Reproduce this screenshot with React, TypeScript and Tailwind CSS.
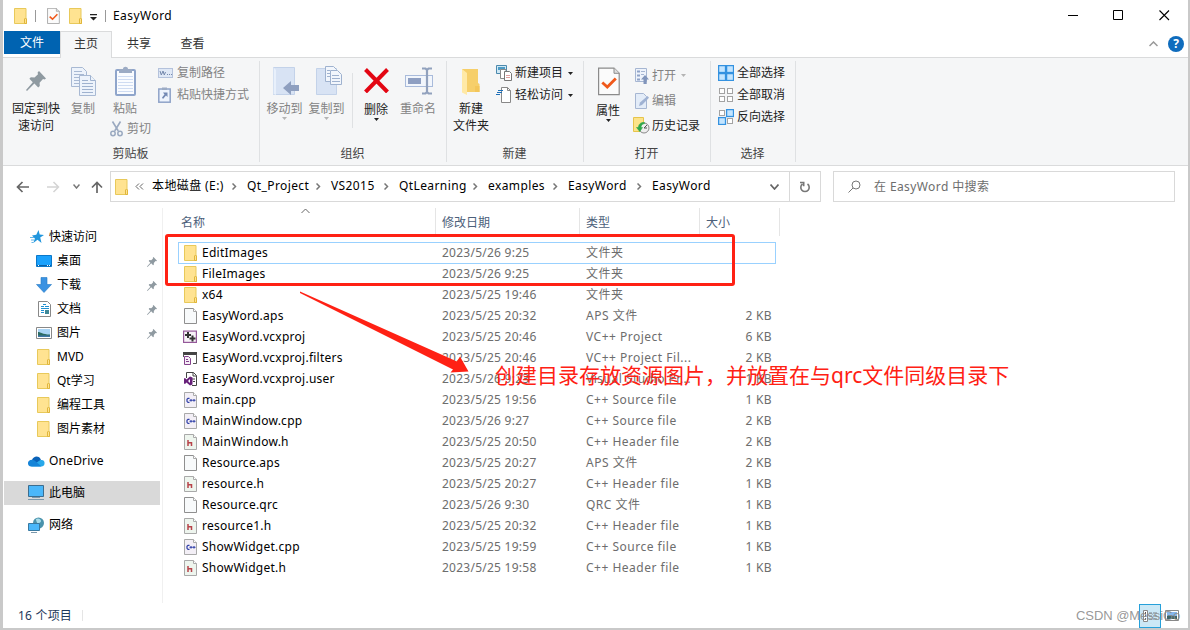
import React from 'react';

type IconProps = { className?: string };

const FolderIcon: React.FC<IconProps> = ({ className }) => (
    <svg className={className} width="14" height="16" viewBox="0 0 14 16" fill="none">
        <path d="M.5.5h11.500v11h.5v4H.5z" fill="#ffe391" stroke="#e8c95a" />
        <path d="M10.500 15.500v-4.500l1-1 1 1v4.500z" fill="#ffe391" stroke="#e0b63c" />
    </svg>
);

const PinIcon: React.FC<IconProps & { size: number }> = ({ className, size }) => (
    <svg className={className} width={size} height={size} viewBox="0 0 20 20" fill="#8f9aa1">
        <path d="M13 0 20 7.5 18.6 8.6 17 8.1 13.6 11.8 13.8 15 12.2 16.5 8.4 12.6 1 20 0 19 6.8 11.3 3.4 7.8 4.8 6.2 8.5 6.6 12 3.2 11.6 1.4z" />
    </svg>
);

const CheckDocIcon: React.FC<{ width: number; height: number }> = ({ width, height }) => (
    <svg width={width} height={height} viewBox="0 0 22 28" fill="none">
        <path d="M.6.6H16l5.2 5.2v21.4H.6z" fill="#fbfbfb" stroke="#8b8b8b" strokeWidth="1.2" />
        <path d="M16 .6v5.2h5.2" fill="#ddd" stroke="#8b8b8b" />
        <path d="m4.3 15 5 4.6L17.8 11" stroke="#f0591b" strokeWidth="2.8" />
    </svg>
);

const CopyIcon = () => (
    <svg width="25" height="29" viewBox="0 0 25 29" fill="#edf3fb" stroke="#a8b9d3">
        <path d="M.5.5h11l4 4v15H.5z" />
        <path d="M3 4.5h8M3 7.5h10M3 10.500h10M3 13.500h10M3 16.500h5" />
        <path d="M8.500 8.500h11l5 5v15h-16z" />
        <path d="M19.500 8.500v5h5M11 13.500h6M11 16.500h11M11 19.500h11M11 22.500h11M11 25.500h11" stroke="#9fb2cf" />
    </svg>
);

const PasteIcon = () => (
    <svg width="21" height="30" viewBox="0 0 21 30" fill="none">
        <rect x="1" y="4" width="19" height="25" rx="1" fill="#fafcff" stroke="#8fa5cb" strokeWidth="2" />
        <path d="M4 3h4c0-3 5-3 5 0h4v4H4z" fill="#9cabc4" />
        <path d="M3 10.500h15M3 13.500h15M3 16.500h15M3 19.500h15M3 22.500h15M3 25.500h15" stroke="#cfdcf2" />
    </svg>
);

const ScissorsIcon = () => (
    <svg width="13" height="16" viewBox="0 0 13 16" fill="none" stroke="#9aa9c0">
        <path d="M2.500.5 8.300 10M10.500.5 4.700 10" strokeWidth="1.600" />
        <circle cx="3" cy="12.500" r="2.200" strokeWidth="1.500" />
        <circle cx="10" cy="12.500" r="2.200" strokeWidth="1.500" />
    </svg>
);

const PathIcon = () => (
    <svg width="15" height="10" viewBox="0 0 15 10" fill="none">
        <rect x=".5" y=".5" width="14" height="9" fill="#dfe8f6" stroke="#b4c2dc" />
        <path d="m2 3 1.300 4L5 3l1.300 4L7.500 4M9 6.500h1M11 6.500h1M13 6.500h1" stroke="#7589ad" />
    </svg>
);

const ShortcutIcon = () => (
    <svg width="13" height="16" viewBox="0 0 13 16" fill="none">
        <rect x=".8" y="2" width="11.400" height="13.200" fill="#eef4fd" stroke="#8fa3c8" strokeWidth="1.500" />
        <path d="M4 .5h5v2.500H4z" fill="#9cabc4" />
        <path d="M5 5.500h4.500V10L8 8.600 5 12 4 10.500l2.500-3z" fill="#7389b4" />
    </svg>
);

const MoveToIcon = () => (
    <svg width="26" height="29" viewBox="0 0 26 29" fill="none">
        <path d="M.5.5h21v27H.5z" fill="#d8e3f4" stroke="#c3d2e9" />
        <path d="M.5.5 3 3v25l-2.500-1z" fill="#e8f0fb" />
        <path d="M10 21 18 14v4h8v6h-8v4z" fill="#8e9fbf" />
    </svg>
);

const CopyToIcon = () => (
    <svg width="26" height="30" viewBox="0 0 26 30" fill="none">
        <path d="M.5 2.500h20v26H.5z" fill="#d8e3f4" stroke="#c3d2e9" />
        <path d="M9.500.5h8l3 3v12h-11z" fill="#f2f6fc" stroke="#9fb2cf" />
        <path d="M14.500 4.500h7l4 4v10h-11z" fill="#f2f6fc" stroke="#9fb2cf" />
        <path d="M11 4.500h3M11 7.500h3M11 10.500h3M16 9.500h7M16 12.500h8M16 15.500h8" stroke="#9fb2cf" />
    </svg>
);

const DeleteIcon = () => (
    <svg width="25" height="25" viewBox="0 0 25 25" fill="none">
        <path d="M1.500 1.500 23.500 24M23.500 1.500 1.500 24" stroke="#e30613" strokeWidth="4" />
    </svg>
);

const RenameIcon = () => (
    <svg width="28" height="28" viewBox="0 0 28 28" fill="none">
        <rect x=".5" y="8.500" width="27" height="11" fill="#f2f6fc" stroke="#a9bbdb" />
        <path d="M3 11h13v6H3z" fill="#8e9fc2" />
        <path d="M17 1.500h3.500L22 3l1.500-1.500H27M22 2v24M17 26.500h3.500L22 25l1.500 1.500H27" stroke="#91a1bd" strokeWidth="2.200" />
    </svg>
);

const NewFolderIcon = () => (
    <svg width="20" height="28" viewBox="0 0 20 28" fill="none">
        <path d="M1 1h16v14l1.500 1v8H1z" fill="#f6cf6a" />
        <path d="M1 1 6 5v22l-5-2.500z" fill="#ffe9a6" />
        <path d="M14 18h4.500v6H14z" fill="#f3c65a" />
    </svg>
);

const NewItemIcon = () => (
    <svg width="16" height="16" viewBox="0 0 16 16" fill="none">
        <path d="M.5.5h10v8H.5z" fill="#cfe8f5" stroke="#4b89ad" />
        <path d="M2 2h7v3H2z" fill="#4c9bc5" />
        <path d="M4.500 4.500H10v9H4.500z" fill="#fff" stroke="#8a8a8a" />
        <path d="M8.500 6.500h5l2 2v7h-7z" fill="#fff" stroke="#777" />
        <path d="M10 10.500h4M10 12.500h4" stroke="#e1a0a0" />
    </svg>
);

const EasyAccessIcon = () => (
    <svg width="16" height="16" viewBox="0 0 16 16" fill="none">
        <path d="M5.500.5h6l3 3v12h-9z" fill="#fff" stroke="#888" />
        <path d="M11.500.5v3h3" stroke="#888" />
        <path d="M2 3.500h5M1 5.500h5M0 7.500h4" stroke="#1d6fb8" strokeWidth="1.200" />
    </svg>
);

const OpenIcon = () => (
    <svg width="14" height="16" viewBox="0 0 14 16" fill="none">
        <path d="M.5.500h11v13H.5z" fill="#eef3fb" stroke="#a6b6d2" />
        <path d="M2 3.500h3M2 7.500h3M2 11.500h3" stroke="#8fa3c8" strokeWidth="2" />
        <path d="M6 3.500h4M6 6.500h3" stroke="#a6b6d2" />
        <path d="m10 7 4 4.500h-2.300V16H8.500v-4.500H6z" fill="#8195bb" />
    </svg>
);

const EditIcon = () => (
    <svg width="14" height="16" viewBox="0 0 14 16" fill="none">
        <path d="M.5.5h8l3 3v12H.5z" fill="#e3ecf8" stroke="#a6b6d2" />
        <path d="m4 13 1-3.500L12.500 3 14 4.800 7 12z" fill="#9fb2d3" />
    </svg>
);

const HistoryIcon = () => (
    <svg width="17" height="17" viewBox="0 0 17 17" fill="none">
        <path d="M.5.5h10v14H.5z" fill="#fce38a" stroke="#e6c44b" />
        <circle cx="11" cy="11" r="5" fill="#eee" stroke="#888" />
        <path d="m11 11 3-3M11 11h3" stroke="#555" />
        <path d="M11.500 5.500C7 5 5.500 8 5.500 10.500H3.500L6.800 14.500 9.500 10.500H8C8 8.500 9 7 11.500 6.500z" fill="#2fa84a" stroke="#2fa84a" strokeWidth=".6" />
    </svg>
);

const SelectIcon: React.FC<{ on: boolean[] }> = ({ on }) => (
    <svg width="16" height="16" viewBox="0 0 16 16">
        {on.map((v, i) => (
            <rect
                key={i}
                x={(i % 2) * 8 + (v ? 0.6 : 1.5)}
                y={(i > 1 ? 8 : 0) + (v ? 0.6 : 1.5)}
                width={v ? 6.9 : 5}
                height={v ? 6.9 : 5}
                fill={v ? '#c4e5ff' : '#fff'}
                stroke={v ? '#3492e0' : '#a3a3a3'}
                strokeWidth={v ? 1.3 : 1}
            />
        ))}
    </svg>
);

const Caret: React.FC<IconProps & { color?: string }> = ({ className, color = '#222' }) => (
    <svg className={className} width="5" height="3" viewBox="0 0 5 3">
        <path d="M0 0h5L2.500 3z" fill={color} />
    </svg>
);

const Chevron: React.FC<IconProps & { d: string; width?: number; height?: number; color?: string; stroke?: number }> = ({ className, d, width = 9, height = 6, color = '#666', stroke = 1.5 }) => (
    <svg className={className} width={width} height={height} viewBox={`0 0 ${width} ${height}`} fill="none">
        <path d={d} stroke={color} strokeWidth={stroke} />
    </svg>
);

const FileIcon: React.FC<{ kind: string }> = ({ kind }) => {
    if (kind === 'folder') return <FolderIcon />;
    if (kind === 'proj') {
        return (
            <svg className="-ml-px" width="14" height="14" viewBox="0 0 14 14">
                <rect x=".6" y="1.100" width="12.800" height="11.300" fill="#f7f2f7" stroke="#95599a" strokeWidth="1.200" />
                <path d="M2 5h6M5 2v6M6.500 8.500h6M9.500 5.500v6" stroke="#333" strokeWidth="2" />
            </svg>
        );
    }
    if (kind === 'filters') {
        return (
            <svg className="-ml-px" width="14" height="14" viewBox="0 0 14 14" fill="none">
                <path d="M0 1h14v3H0z" fill="#444" />
                <path d="M13.500 3v9.500H10M.5 3v3" stroke="#555" />
                <path d="M1.500 5.500h4l2 2v6h-6z" fill="#f6edf7" stroke="#84428c" />
                <path d="M3 8.500h2M3 10.500h3" stroke="#84428c" />
            </svg>
        );
    }
    if (kind === 'user') {
        return (
            <svg width="14" height="14" viewBox="0 0 14 14" fill="none">
                <path d="M2.500 6V.500h7l3 3v10H8" stroke="#444" />
                <path d="M9 .5v3.500h3.500M7 7h4M9 9.500h2" stroke="#444" />
                <path d="M6 4.500 8.500 5.500v7L6 13.500 2.500 10.500 1 12l-1-.5v-5L1 6l1.500 1.500zM6 7 4 9l2 2z" fill="#68217a" />
            </svg>
        );
    }
    return (
        <svg width="13" height="16" viewBox="0 0 13 16" fill="none">
            <path d="M.5.5h9l3 3v12H.5z" fill={kind === 'h' ? '#eef5ee' : kind === 'cpp' ? '#f3eff6' : '#f8fafb'} stroke={kind === 'file' ? '#8f8f8f' : '#a9a9a9'} />
            <path d="M9.500.5v3h3" fill="#fff" stroke="#aaa" />
            {kind === 'h' && <path d="M4 6v6M4 8.700h3.500V12" stroke="#b8434a" strokeWidth="1.500" />}
            {kind === 'cpp' && (
                <>
                    <path d="M5.500 6.300H4L3 7.300v2l1 1h1.500" stroke="#2f3fa8" strokeWidth="1.200" />
                    <path d="M5.500 8.300H8.500M7 7v2.600M8.500 8.300H11.500M10 7v2.600" stroke="#2f3fa8" />
                </>
            )}
        </svg>
    );
};

interface BigButtonProps {
    icon: React.ReactNode;
    lines: string[];
    width: string;
    disabled?: boolean;
    caret?: boolean;
}

const BigButton: React.FC<BigButtonProps> = ({ icon, lines, width, disabled, caret }) => (
    <div className={`flex shrink-0 flex-col items-center ${width} ${disabled ? 'text-[#838383]' : 'text-[#222]'}`}>
        <div className="flex h-[34px] items-start justify-center">{icon}</div>
        {lines.map((line) => (
            <span key={line} className="leading-[17px]">{line}</span>
        ))}
        {caret && <Caret color={disabled ? '#b4b4b4' : '#222'} />}
    </div>
);

const SmallButton: React.FC<{ icon: React.ReactNode; label: string; disabled?: boolean; caret?: boolean; height?: string }> = ({ icon, label, disabled, caret, height = 'h-[22px]' }) => (
    <div className={`flex items-center ${height} ${disabled ? 'text-[#838383]' : 'text-[#222]'}`}>
        <span className="flex w-[19px] shrink-0 items-center">{icon}</span>
        <span>{label}</span>
        {caret && <Caret className="ml-[5px]" color={disabled ? '#b4b4b4' : '#222'} />}
    </div>
);

const RibbonGroup: React.FC<{ label: string; width: string; children: React.ReactNode }> = ({ label, width, children }) => (
    <div className={`my-[3px] flex shrink-0 flex-col border-r border-[#dfe1e3] ${width}`}>
        <div className="flex flex-1 pt-[5px]">{children}</div>
        <div className="h-[17px] pr-px text-center leading-[18px] text-[#444]">{label}</div>
    </div>
);

const Ribbon = () => (
    <div className="flex h-[109px] border-y border-[#dadbdc] bg-[#f5f6f7]">
        <RibbonGroup label="剪贴板" width="w-[257px]">
            <BigButton width="ml-[5px] w-[56px]" icon={<PinIcon size={20} className="mt-[5px]" />} lines={['固定到快', '速访问']} />
            <BigButton width="ml-[2px] w-[34px]" icon={<div className="pt-px pl-px"><CopyIcon /></div>} lines={['复制']} disabled />
            <div className="ml-[10px] w-[48px]">
                <BigButton width="w-[30px]" icon={<div className="pl-px"><PasteIcon /></div>} lines={['粘贴']} disabled />
                <div className="mt-px flex h-[22px] items-center gap-1 text-[#838383]">
                    <ScissorsIcon />
                    <span>剪切</span>
                </div>
            </div>
            <div className="-mt-1">
                <SmallButton icon={<PathIcon />} label="复制路径" disabled />
                <SmallButton icon={<ShortcutIcon />} label="粘贴快捷方式" disabled />
            </div>
        </RibbonGroup>
        <RibbonGroup label="组织" width="w-[187px]">
            <BigButton width="ml-1 w-[41px]" icon={<div className="pt-px pl-[3px]"><MoveToIcon /></div>} lines={['移动到']} disabled caret />
            <BigButton width="w-[43px]" icon={<div className="pl-[4px]"><CopyToIcon /></div>} lines={['复制到']} disabled caret />
            <div className="mt-[7px] ml-[4px] h-[55px] w-px bg-[#dfe1e3]" />
            <BigButton width="ml-[6px] mt-px w-[34px]" icon={<div className="pt-px pl-px"><DeleteIcon /></div>} lines={['删除']} caret />
            <BigButton width="ml-[4px] w-[42px]" icon={<div className="pt-px pl-[2px]"><RenameIcon /></div>} lines={['重命名']} disabled />
        </RibbonGroup>
        <RibbonGroup label="新建" width="w-[137px]">
            <BigButton width="ml-1 w-[40px]" icon={<div className="pt-[2px]"><NewFolderIcon /></div>} lines={['新建', '文件夹']} />
            <div className="-mt-1 ml-[5px]">
                <SmallButton icon={<NewItemIcon />} label="新建项目" caret />
                <SmallButton icon={<EasyAccessIcon />} label="轻松访问" caret />
            </div>
        </RibbonGroup>
        <RibbonGroup label="打开" width="w-[127px]">
            <BigButton width="ml-[6px] mt-[2px] w-[36px]" icon={<div className="-mt-px pl-px"><CheckDocIcon width={22} height={29} /></div>} lines={['属性']} caret />
            <div className="-mt-[4px] ml-[7px]">
                <SmallButton height="h-[27px]" icon={<span className="pl-[2px]"><OpenIcon /></span>} label="打开" disabled caret />
                <SmallButton height="h-[24px]" icon={<span className="pl-[2px]"><EditIcon /></span>} label="编辑" disabled />
                <SmallButton height="h-[25px]" icon={<HistoryIcon />} label="历史记录" />
            </div>
        </RibbonGroup>
        <RibbonGroup label="选择" width="w-[85px]">
            <div className="-mt-1 ml-[7px]">
                <SmallButton icon={<SelectIcon on={[true, true, true, true]} />} label="全部选择" />
                <SmallButton icon={<SelectIcon on={[false, false, false, false]} />} label="全部取消" />
                <SmallButton icon={<SelectIcon on={[false, true, true, false]} />} label="反向选择" />
            </div>
        </RibbonGroup>
    </div>
);

const TitleBar = () => (
    <div className="flex h-[31px] shrink-0 items-center">
        <FolderIcon className="ml-[11px]" />
        <div className="ml-[7px] h-3 w-px bg-[#999]" />
        <div className="ml-[11px]"><CheckDocIcon width={13} height={16} /></div>
        <FolderIcon className="ml-[9px]" />
        <svg className="mt-[3px] ml-[7px]" width="7" height="7" viewBox="0 0 7 7">
            <path d="M0 0h7v1.200H0zM0 3h7L3.500 6.500z" fill="#222" />
        </svg>
        <div className="ml-[8px] h-3 w-px bg-[#999]" />
        <span className="ml-[7px] text-[12px] tracking-[0.45px] text-black">EasyWord</span>
        <div className="mr-[18px] ml-auto flex items-center">
            <svg width="11" height="11" viewBox="0 0 11 11"><path d="M0 5.500h10" stroke="#000" /></svg>
            <svg className="ml-[34px]" width="11" height="11" viewBox="0 0 11 11" fill="none"><path d="M.5.5h9v9h-9z" stroke="#000" /></svg>
            <svg className="ml-[35px]" width="11" height="11" viewBox="0 0 11 11" fill="none"><path d="m.5.5 9.500 9.500m0-9.500L.5 10" stroke="#000" strokeWidth="1.100" /></svg>
        </div>
    </div>
);

const Tabs = () => (
    <div className="flex h-[26px] shrink-0 text-[#333]">
        <div className="ml-px h-[23px] w-[56px] bg-[#0063b1] text-center leading-[24px] text-white">文件</div>
        <div className="z-10 -mb-px h-[27px] w-[52px] border border-b-0 border-[#dadbdc] bg-[#f5f6f7] text-center leading-[24px]">主页</div>
        <div className="w-[54px] text-center leading-[25px]">共享</div>
        <div className="w-[53px] text-center leading-[25px]">查看</div>
        <div className="mr-[4px] ml-auto flex items-center">
            <Chevron d="m.5 5 4-4 4 4" color="#999" />
            <div className="ml-[10px] h-4 w-4 rounded-full bg-[#0f6cbd] text-center text-[12px] leading-4 font-bold text-white">?</div>
        </div>
    </div>
);

const crumbs = [
    { name: '本地磁盘 (E:)', width: 'w-[95px]' },
    { name: 'Qt_Project', width: 'w-[84px]' },
    { name: 'VS2015', width: 'w-[68px]' },
    { name: 'QtLearning', width: 'w-[89px]' },
    { name: 'examples', width: 'w-[80px]' },
    { name: 'EasyWord', width: 'w-[84px]' },
    { name: 'EasyWord', width: '' },
];

const AddressBar = () => (
    <div className="flex h-[40px] shrink-0 items-start pt-[5px]">
        <div className="flex h-[31px] w-[107px] items-center pl-[13px]">
            <svg width="13" height="12" viewBox="0 0 13 12" fill="none" stroke="#666" strokeWidth="1.700"><path d="M13 6H1.500M6.500 1l-5 5 5 5" /></svg>
            <svg className="ml-[18px]" width="13" height="12" viewBox="0 0 13 12" fill="none" stroke="#d4d4d4" strokeWidth="1.500"><path d="M0 6h11.500M6.500 1l5 5-5 5" /></svg>
            <Chevron className="ml-[13px]" width={7} height={5} d="m.5.5 3 3.500 3-3.500" color="#777" />
            <svg className="ml-[11px]" width="12" height="12" viewBox="0 0 12 12" fill="none" stroke="#666" strokeWidth="1.700"><path d="M6 12V1.500M1 6.500l5-5 5 5" /></svg>
        </div>
        <div className="flex h-[31px] w-[711px] items-center border border-[#d9d9d9] text-black">
            <FolderIcon className="ml-[4px]" />
            <Chevron className="ml-[6px]" width={9} height={7} d="m4 .5-3 3 3 3M8 .5l-3 3 3 3" color="#666" stroke={1} />
            <div className="ml-[8px] flex flex-1">
                {crumbs.map((c, i) => (
                    <div key={i} className={`flex shrink-0 items-center ${c.width}`}>
                        <span className="-mt-[2px] tracking-[0.4px] whitespace-nowrap">{c.name}</span>
                        {c.width && <Chevron className="mr-[10px] ml-auto" width={5} height={7} d="m.5.5 3 3-3 3" color="#777" />}
                    </div>
                ))}
            </div>
            <Chevron className="mr-[10px]" d="m.5.5 4 4.500 4-4.500" color="#666" stroke={1.7} />
            <div className="flex h-full w-[31px] items-center justify-center border-l border-[#d9d9d9]">
                <svg width="12" height="12" viewBox="0 0 12 12" fill="none" stroke="#777" strokeWidth="1.600">
                    <path d="M8.500 3A4.200 4.200 0 1 1 3.500 3M1 1.500h3.700v3.700" />
                </svg>
            </div>
        </div>
        <div className="ml-[12px] flex h-[31px] w-[342px] items-center border border-[#d9d9d9] text-[#6d6d6d]">
            <svg className="ml-[14px]" width="13" height="13" viewBox="0 0 13 13" fill="none" stroke="#777"><circle cx="8" cy="5" r="4" /><path d="m5 8-4.500 4.500" /></svg>
            <span className="ml-[13px] tracking-[0.4px]">在 EasyWord 中搜索</span>
        </div>
    </div>
);

const DesktopIcon = () => (
    <svg width="16" height="12" viewBox="0 0 16 12"><path d="M.5.5h15v11H.5z" fill="#1aa1fc" stroke="#0b78c9" /><path d="M1 10h14v1H1z" fill="#0a5fa5" /><path d="M2 10h1v1H2zM11 10h1v1h-1zM13 10h1v1h-1z" fill="#fff" /></svg>
);

const DownloadIcon = () => (
    <svg width="16" height="16" viewBox="0 0 16 16"><path d="M5 .5h6v7h4.500L8 15.500.500 7.500H5z" fill="#3a92e2" stroke="#2478c4" strokeWidth=".6" /></svg>
);

const DocumentIcon = () => (
    <svg width="13" height="16" viewBox="0 0 13 16" fill="none"><path d="M.5.5h9l3 3v12H.5z" fill="#fff" stroke="#888" /><path d="M5 3.500h3M3 5.500h3M7 5.500h4M3 7.500h8M3 9.500h3M3 11.500h3" stroke="#1f8fd0" /><path d="M7 9h4v4H7z" fill="#3d8797" /></svg>
);

const PicturesIcon = () => (
    <svg width="16" height="12" viewBox="0 0 16 12"><path d="M.5.5h15v11H.5z" fill="#fff" stroke="#888" /><path d="M2 2h12v8H2z" fill="#a9d4f5" /><path d="M2 5c3 0 4 2.500 12 2.500V10H2z" fill="#2c6b62" /><path d="M2 8.500h12V10H2z" fill="#3f77a8" /></svg>
);

const StarIcon = () => (
    <svg width="14" height="14" viewBox="0 0 14 14"><path d="m8.500 0 1.200 4.600L14 5l-3.800 2.600L11.500 13 7.500 9.800 3.300 13l1.600-4.500L2 5.600l4.300-.8z" fill="#2196dd" /><path d="M0 7.500h4M1 10h3M1.500 12.500h2" stroke="#61b6e8" /></svg>
);

const OneDriveIcon = () => (
    <svg width="17" height="11" viewBox="0 0 17 11"><path d="M4 4C5.500-.5 11.500-.8 13 4l-6 5H2.500C-.5 8.500-.5 4.500 4 4z" fill="#0a62b8" /><path d="M3 10.500 12 4.300c3-1 5 .7 4.500 3.500-.2 1.800-1.500 2.700-3 2.700z" fill="#28a8ea" /><path d="M0 7.500C0 4 4 3 6.500 4.500l6.800 5.700-.8.300H3C1.500 10.500 0 9.500 0 7.500z" fill="#1584d8" /></svg>
);

const ComputerIcon = () => (
    <svg width="17" height="16" viewBox="0 0 17 16"><path d="M.5.5h15v11H.5z" fill="#4ab7fa" stroke="#3c6d8e" /><path d="M4 12.500h8M0 14.500h16" stroke="#7b98ab" /></svg>
);

const NetworkIcon = () => (
    <svg width="17" height="17" viewBox="0 0 17 17"><circle cx="10.500" cy="6" r="5.500" fill="#4b93ac" /><path d="M8 2c2-1.500 5 0 5 2s-2 1-2 3-3-2-3-5z" fill="#a9dcea" /><path d="M.5 6.500h11v7H.5z" fill="#4ab7fa" stroke="#3979a0" /><path d="M3 15.500h6" stroke="#7b98ab" /></svg>
);

const quickAccess = [
    { name: '桌面', icon: <DesktopIcon />, pinned: true },
    { name: '下载', icon: <DownloadIcon />, pinned: true },
    { name: '文档', icon: <DocumentIcon />, pinned: true },
    { name: '图片', icon: <PicturesIcon />, pinned: true },
    { name: 'MVD', icon: <FolderIcon /> },
    { name: 'Qt学习', icon: <FolderIcon /> },
    { name: '编程工具', icon: <FolderIcon /> },
    { name: '图片素材', icon: <FolderIcon /> },
];

const Sidebar = () => (
    <div className="mt-[2px] flex w-[160px] shrink-0 flex-col border-r border-[#f0f0f0] pt-[17px] text-black">
        <div className="flex h-6 items-center pl-[27px]">
            <StarIcon />
            <span className="ml-[5px]">快速访问</span>
        </div>
        {quickAccess.map((item) => (
            <div key={item.name} className="flex h-6 items-center pl-[33px]">
                <span className="flex w-[16px] justify-center">{item.icon}</span>
                <span className="ml-[5px]">{item.name}</span>
                {item.pinned && <PinIcon size={10} className="mt-px mr-[5px] ml-auto" />}
            </div>
        ))}
        <div className="mt-[8px] flex h-6 items-center pl-[25px]">
            <OneDriveIcon />
            <span className="ml-[4px] tracking-[0.2px]">OneDrive</span>
        </div>
        <div className="mt-[8px] mr-[2px] ml-px flex h-6 items-center bg-[#d9d9d9] pl-[24px]">
            <ComputerIcon />
            <span className="ml-[4px]">此电脑</span>
        </div>
        <div className="mt-[8px] flex h-6 items-center pl-[25px]">
            <NetworkIcon />
            <span className="ml-[4px]">网络</span>
        </div>
    </div>
);

const files = [
    { name: 'EditImages', date: '2023/5/26 9:25', type: '文件夹', size: '', kind: 'folder' },
    { name: 'FileImages', date: '2023/5/26 9:25', type: '文件夹', size: '', kind: 'folder' },
    { name: 'x64', date: '2023/5/25 19:46', type: '文件夹', size: '', kind: 'folder' },
    { name: 'EasyWord.aps', date: '2023/5/25 20:32', type: 'APS 文件', size: '2 KB', kind: 'file' },
    { name: 'EasyWord.vcxproj', date: '2023/5/25 20:46', type: 'VC++ Project', size: '6 KB', kind: 'proj' },
    { name: 'EasyWord.vcxproj.filters', date: '2023/5/25 20:46', type: 'VC++ Project Fil...', size: '2 KB', kind: 'filters' },
    { name: 'EasyWord.vcxproj.user', date: '2023/5/26 9:23', type: 'Visual Studio Pr...', size: '1 KB', kind: 'user' },
    { name: 'main.cpp', date: '2023/5/25 19:56', type: 'C++ Source file', size: '1 KB', kind: 'cpp' },
    { name: 'MainWindow.cpp', date: '2023/5/26 9:27', type: 'C++ Source file', size: '2 KB', kind: 'cpp' },
    { name: 'MainWindow.h', date: '2023/5/25 20:50', type: 'C++ Header file', size: '2 KB', kind: 'h' },
    { name: 'Resource.aps', date: '2023/5/25 20:27', type: 'APS 文件', size: '2 KB', kind: 'file' },
    { name: 'resource.h', date: '2023/5/25 20:27', type: 'C++ Header file', size: '1 KB', kind: 'h' },
    { name: 'Resource.qrc', date: '2023/5/26 9:30', type: 'QRC 文件', size: '1 KB', kind: 'file' },
    { name: 'resource1.h', date: '2023/5/25 20:32', type: 'C++ Header file', size: '1 KB', kind: 'h' },
    { name: 'ShowWidget.cpp', date: '2023/5/25 19:59', type: 'C++ Source file', size: '1 KB', kind: 'cpp' },
    { name: 'ShowWidget.h', date: '2023/5/25 19:58', type: 'C++ Header file', size: '1 KB', kind: 'h' },
];

const FileList = () => (
    <div className="flex flex-1 flex-col">
        <div className="relative mt-[2px] flex h-[28px] leading-[29px] text-[#4c607a]">
            <div className="w-[273px] border-r border-[#e5e5e5] pl-[18px]">名称</div>
            <div className="w-[144px] border-r border-[#e5e5e5] pl-[6px]">修改日期</div>
            <div className="w-[120px] border-r border-[#e5e5e5] pl-[6px]">类型</div>
            <div className="w-[80px] border-r border-[#e5e5e5] pl-[6px]">大小</div>
            <Chevron className="absolute top-0 left-[138px]" d="m.5 5 4-4 4 4" stroke={1} />
        </div>
        <div className="mt-[6px] ml-[15px] w-[598px]">
            {files.map((f, i) => (
                <div
                    key={f.name}
                    className={`flex items-center border pl-[5px] text-[#6d6d6d] ${i === 0 ? '-mb-px h-[22px] border-[#99d1ff]' : 'h-[21px] border-transparent'}`}
                >
                    <span className="flex w-[18px] shrink-0 items-center"><FileIcon kind={f.kind} /></span>
                    <span className="w-[240px] shrink-0 tracking-[0.25px] text-black">{f.name}</span>
                    <span className="w-[144px] shrink-0 tracking-[0.25px]">{f.date}</span>
                    <span className="w-[120px] shrink-0 tracking-[0.5px]">{f.type}</span>
                    <span className="w-[66px] shrink-0 text-right tracking-[0.35px]">{f.size}</span>
                </div>
            ))}
        </div>
    </div>
);

const StatusBar = () => (
    <div className="flex h-[25px] shrink-0 items-center text-[#1e395b]">
        <span className="ml-[15px] w-[64px] tracking-[0.2px]">16 个项目</span>
        <div className="h-[11px] w-px bg-[#e5e5e5]" />
        <div className="mr-[9px] ml-auto flex items-center">
            <div className="flex h-[24px] w-[22px] items-center justify-center border border-[#26a0da] bg-[#cbe8f6]">
                <svg width="14" height="12" viewBox="0 0 14 12" fill="none"><path d="M.5.500h4v11h-4z" fill="#fff" stroke="#888" /><path d="M2.500 2v8" stroke="#555" strokeDasharray="2 1" /><path d="M6 3h3M10 3h4M6 6h3M10 6h4M6 9h3M10 9h4" stroke="#77818a" /></svg>
            </div>
            <svg className="ml-[4px]" width="14" height="12" viewBox="0 0 14 12"><path d="M.5.500h13v10H.5z" fill="#fff" stroke="#888" /><path d="M2 2h10v7H2z" fill="#85b7ee" /><path d="M2 6c3-1 5 0 10 0v3H2z" fill="#3d6467" /></svg>
        </div>
    </div>
);

export default function App() {
    return (
        <div className="relative flex h-[630px] w-[1190px] overflow-hidden bg-[#c9c9c9] pb-[2px] pl-[3px] font-['Noto_Sans','Noto_Sans_CJK_SC',sans-serif] text-[12px] leading-4">
            <div className="flex h-[628px] w-[1185px] flex-col bg-white">
                <TitleBar />
                <Tabs />
                <Ribbon />
                <AddressBar />
                <div className="flex h-[397px] shrink-0">
                    <Sidebar />
                    <FileList />
                </div>
                <StatusBar />
            </div>

            {/* Annotations over the window */}
            <div className="absolute top-[234px] left-[165px] h-[52px] w-[570px] rounded-[3px] border-3 border-[#ff2114]" />
            <svg className="absolute top-[290px] left-[298px]" width="172" height="86" viewBox="298 290 172 86">
                <path d="M300 291.500 457 361.500 460 356.500 468.500 371.500 450.500 372.500 453 369.500 300 293z" fill="#ff2114" />
            </svg>
            <div className="absolute top-[360px] left-[495px] text-[21px] leading-[30px] whitespace-nowrap text-[#ff2114]">
                创建目录存放资源图片，并放置在与qrc文件同级目录下
            </div>
            <div className="absolute top-[608px] left-[1076px] font-['Liberation_Sans',sans-serif] text-[13px] leading-4 tracking-[-0.05px] whitespace-nowrap text-[#8c8c8c]/90">
                CSDN @MessiGo
            </div>
        </div>
    );
}
